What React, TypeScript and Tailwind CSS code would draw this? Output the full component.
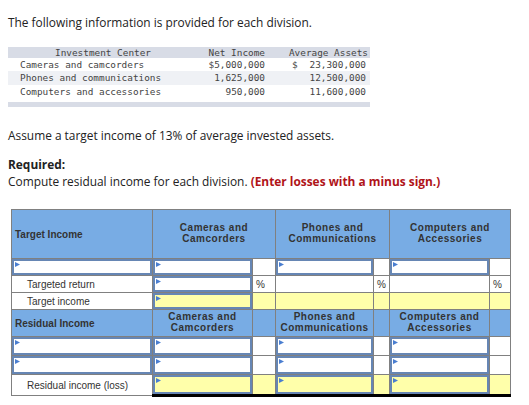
import React from "react";

const Mark = () => (
  <svg width="5" height="5" viewBox="0 0 5 5" className="absolute left-[1px] top-[1px]">
    <path d="M0 0 L5 2.5 L0 5 Z" fill="#4a7ed0" />
  </svg>
);

const Inp = ({ yellow = false, h }: { yellow?: boolean; h: string }) => (
  <div
    className={`relative w-full border-2 border-[#6686b4] ${h} ${yellow ? "bg-[#ffffaa]" : "bg-white"}`}
  >
    <Mark />
  </div>
);

const Hd = ({ children }: { children?: React.ReactNode }) => (
  <div className="text-center leading-[11px]">{children}</div>
);

export default function App() {
  const td = "border border-[#808080] p-0 align-middle";
  const blue = "bg-[#78ace4]";
  const yel = "bg-[#ffffaa]";
  const hdr = "font-bold tracking-[0.5px]";
  return (
    <div className="w-[529px] h-[405px] bg-white text-[#222] pt-[14px]" style={{ fontFamily: '"Open Sans", "Liberation Sans", sans-serif' }}>
      <div className="px-2 text-[11.9px] leading-[17px]">The following information is provided for each division.</div>

      <div className="mx-2 mt-[16px] w-[362px] text-[#444] text-[9.4px]" style={{ fontFamily: '"DejaVu Sans Mono", "Liberation Mono", monospace' }}>
        <div className="grid grid-cols-[190px_67px_105px] bg-[#d8dce6] h-[11px] leading-[11px]">
          <div className="text-center">Investment Center</div>
          <div className="text-right">Net Income</div>
          <div className="text-right pr-[2px]">Average Assets</div>
        </div>
        <div className="grid grid-cols-[190px_67px_105px] h-[13px] leading-[13px]">
          <div className="pl-3">Cameras and camcorders</div>
          <div className="text-right">$5,000,000</div>
          <div className="pr-[4px] flex justify-between pl-[27px]"><span>$</span><span>23,300,000</span></div>
        </div>
        <div className="grid grid-cols-[190px_67px_105px] h-[14px] leading-[14px] bg-[#eff1f5]">
          <div className="pl-3">Phones and communications</div>
          <div className="text-right">1,625,000</div>
          <div className="text-right pr-[4px]">12,500,000</div>
        </div>
        <div className="grid grid-cols-[190px_67px_105px] h-[13px] leading-[13px]">
          <div className="pl-3">Computers and accessories</div>
          <div className="text-right">950,000</div>
          <div className="text-right pr-[4px]">11,600,000</div>
        </div>
        <div className="mt-[4px] h-[5px] bg-[#d8dce6]" />
      </div>

      <div className="px-2 mt-[20px] text-[11.9px] leading-[17px]">Assume a target income of 13% of average invested assets.</div>
      <div className="px-2 mt-[12px] text-[11.9px] leading-[17px] font-bold">Required:</div>
      <div className="px-2 text-[11.9px] leading-[17px]">
        Compute residual income for each division. <span className="font-bold text-[#b01419]">(Enter losses with a minus sign.)</span>
      </div>

      <table
        className="ml-[11px] mt-[19px] border-collapse table-fixed text-[10px] text-[#333]"
        style={{ fontFamily: '"Liberation Sans", Arial, sans-serif', width: 499 }}
      >
        <colgroup>
          <col style={{ width: 141 }} />
          <col style={{ width: 100 }} />
          <col style={{ width: 23 }} />
          <col style={{ width: 98 }} />
          <col style={{ width: 16 }} />
          <col style={{ width: 100 }} />
          <col style={{ width: 21 }} />
        </colgroup>
        <tbody>
          <tr className="h-[49px]">
            <td className={`${td} ${blue} font-bold pl-[3px] pt-[1px]`}>Target Income</td>
            <td colSpan={2} className={`${td} ${blue} ${hdr} pb-[2px]`}><Hd>Cameras and<br />Camcorders</Hd></td>
            <td colSpan={2} className={`${td} ${blue} ${hdr} pb-[2px]`}><Hd>Phones and<br />Communications</Hd></td>
            <td colSpan={2} className={`${td} ${blue} ${hdr} pb-[2px]`}><Hd>Computers and<br />Accessories</Hd></td>
          </tr>
          <tr>
            <td className={td}><Inp h="h-[16px]" /></td>
            <td className={td}><Inp h="h-[16px]" /></td>
            <td className={td}></td>
            <td className={td}><Inp h="h-[16px]" /></td>
            <td className={td}></td>
            <td className={td}><Inp h="h-[16px]" /></td>
            <td className={td}></td>
          </tr>
          <tr>
            <td className={`${td} pl-[15px] h-[17px]`}>Targeted return</td>
            <td className={td}><Inp h="h-[16px]" /></td>
            <td className={`${td} pl-[3px]`}>%</td>
            <td className={td}></td>
            <td className={`${td} pl-[3px]`}>%</td>
            <td className={td}></td>
            <td className={`${td} pl-[3px]`}>%</td>
          </tr>
          <tr>
            <td className={`${td} pl-[15px] h-[17px]`}>Target income</td>
            <td className={`${td} ${yel} border-t-black`}><Inp yellow h="h-[16px]" /></td>
            <td className={`${td} ${yel} border-t-black`}></td>
            <td className={`${td} ${yel} border-t-black`}></td>
            <td className={`${td} ${yel} border-t-black`}></td>
            <td className={`${td} ${yel} border-t-black`}></td>
            <td className={`${td} ${yel} border-t-black`}></td>
          </tr>
          <tr className="h-[27px]">
            <td className={`${td} ${blue} font-bold pl-[3px] pt-[1px]`}>Residual Income</td>
            <td className={`${td} ${blue} ${hdr} pb-[3px]`}><Hd>Cameras and<br />Camcorders</Hd></td>
            <td className={`${td} ${blue}`}></td>
            <td className={`${td} ${blue} ${hdr} pb-[3px]`}><Hd>Phones and<br />Communications</Hd></td>
            <td className={`${td} ${blue}`}></td>
            <td className={`${td} ${blue} ${hdr} pb-[3px]`}><Hd>Computers and<br />Accessories</Hd></td>
            <td className={`${td} ${blue}`}></td>
          </tr>
          {[0, 1].map((i) => (
            <tr key={i}>
              <td className={td}><Inp h="h-[18px]" /></td>
              <td className={td}><Inp h="h-[18px]" /></td>
              <td className={td}></td>
              <td className={td}><Inp h="h-[18px]" /></td>
              <td className={td}></td>
              <td className={td}><Inp h="h-[18px]" /></td>
              <td className={td}></td>
            </tr>
          ))}
          <tr>
            <td className={`${td} pl-[15px] h-[20px] pt-[1px]`}>Residual income (loss)</td>
            <td className={`${td} ${yel} border-t-black border-b-[3px] border-b-black`}><Inp yellow h="h-[19px]" /></td>
            <td className={`${td} ${yel} border-t-black border-b-[3px] border-b-black`}></td>
            <td className={`${td} ${yel} border-t-black border-b-[3px] border-b-black`}><Inp yellow h="h-[19px]" /></td>
            <td className={`${td} ${yel} border-t-black border-b-[3px] border-b-black`}></td>
            <td className={`${td} ${yel} border-t-black border-b-[3px] border-b-black`}><Inp yellow h="h-[19px]" /></td>
            <td className={`${td} ${yel} border-t-black border-b-[3px] border-b-black`}></td>
          </tr>
        </tbody>
      </table>
    </div>
  );
}
